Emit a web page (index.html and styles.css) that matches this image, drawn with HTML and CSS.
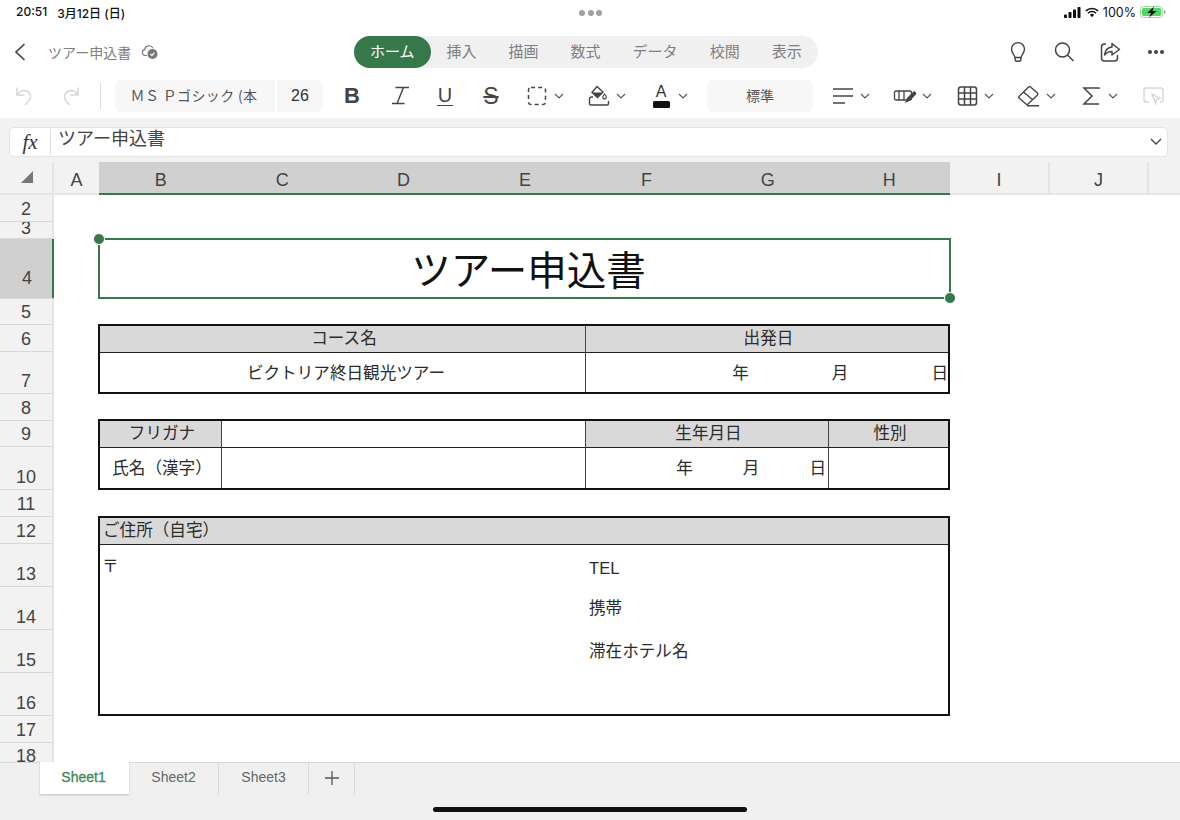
FILE: index.html
```html
<!DOCTYPE html>
<html lang="ja">
<head>
<meta charset="utf-8">
<title>ツアー申込書</title>
<link rel="stylesheet" href="styles.css">
</head>
<body>
<div class="app">
  <div class="status">
    <div class="status-time"><span>20:51</span><span>3月12日 (日)</span></div>
    <div class="status-dots"><i></i><i></i><i></i></div>
    <div class="status-right">
      <svg class="ic-signal" viewBox="0 0 17 11"><rect x="0" y="7.5" width="3" height="3.5" rx=".7"/><rect x="4.5" y="5" width="3" height="6" rx=".7"/><rect x="9" y="2.5" width="3" height="8.5" rx=".7"/><rect x="13.5" y="0" width="3" height="11" rx=".7"/></svg>
      <svg class="ic-wifi" viewBox="0 0 16 12"><path d="M1 4.2a10 10 0 0 1 14 0M3.4 6.8a6.600 6.600 0 0 1 9.200 0" fill="none" stroke="#111" stroke-width="1.800"/><path d="M5.600 8.700a3.400 3.400 0 0 1 4.800 0L8 11.300z" fill="#111"/></svg>
      <span class="status-pct">100%</span>
      <svg class="ic-batt" viewBox="0 0 26 12"><rect x=".5" y=".5" width="22" height="11" rx="3" fill="none" stroke="#a5d6a7"/><rect x="2" y="2" width="19" height="8" rx="1.500" fill="#52d869"/><path d="M24 4v4c1 0 1.600-1 1.600-2s-.6-2-1.600-2z" fill="#a5a5a5"/><path d="M14 .5 7 7h4l-1.800 4.500L16.500 5h-4z" fill="#111"/></svg>
    </div>
  </div>

  <header class="appbar">
    <div class="appbar-left">
      <svg class="ic-back" viewBox="0 0 14 20"><path d="M11.500 2 3 10l8.500 8" fill="none" stroke="#444" stroke-width="1.700"/></svg>
      <span class="doc-name">ツアー申込書</span>
      <svg class="ic-cloud" viewBox="0 0 18 16"><path d="M6 11.500H4a3 3 0 0 1-.4-5.900A4.500 4.500 0 0 1 12 4.200" fill="none" stroke="#777" stroke-width="1.100"/><circle cx="11.500" cy="10" r="5" fill="#777"/><path d="m9.300 10 1.600 1.600 2.600-3" fill="none" stroke="#fff" stroke-width="1.100"/></svg>
    </div>
    <nav class="ribbon-tabs">
      <span class="rtab rtab-active">ホーム</span>
      <span class="rtab">挿入</span>
      <span class="rtab">描画</span>
      <span class="rtab">数式</span>
      <span class="rtab">データ</span>
      <span class="rtab">校閲</span>
      <span class="rtab">表示</span>
    </nav>
    <div class="appbar-right">
      <svg class="ic-head" viewBox="0 0 24 24"><path d="M8.800 17.500c0-2.500-3.300-4.300-3.300-8.400a6.500 6.500 0 0 1 13 0c0 4.100-3.300 5.900-3.300 8.400zM9.200 18v1.500c0 1 .8 1.800 1.800 1.800h2c1 0 1.800-.8 1.800-1.800V18" fill="none" stroke="#444" stroke-width="1.400"/></svg>
      <svg class="ic-head" viewBox="0 0 24 24"><circle cx="10.500" cy="10" r="7" fill="none" stroke="#444" stroke-width="1.500"/><path d="m15.500 15 6 6" stroke="#444" stroke-width="1.500"/></svg>
      <svg class="ic-head" viewBox="0 0 24 24"><path d="M8 4H6.500A3 3 0 0 0 3.500 7v11a3 3 0 0 0 3 3h10a3 3 0 0 0 3-3v-3" fill="none" stroke="#444" stroke-width="1.500"/><path d="M14 3.500 21.500 9.500 14 15v-3.500c-3.500 0-5.500 1-7.500 3.500.5-4.500 3-7.500 7.500-8z" fill="none" stroke="#444" stroke-width="1.500" stroke-linejoin="round"/></svg>
      <div class="ic-more"><i></i><i></i><i></i></div>
    </div>
  </header>

  <div class="toolbar">
    <div class="tool-undo">
      <svg class="ic-tool" viewBox="0 0 24 24"><path d="M4 3.500V11h7.500M4 11c3-4 7-5.500 10.500-3.500 4 2.500 4 7 1 10l-3.500 3.500" fill="none" stroke="#d6d6d6" stroke-width="1.500"/></svg>
      <svg class="ic-tool" viewBox="0 0 24 24"><path d="M20 3.500V11h-7.500M20 11c-3-4-7-5.500-10.500-3.500-4 2.500-4 7-1 10l3.500 3.500" fill="none" stroke="#d6d6d6" stroke-width="1.500"/></svg>
    </div>
    <div class="tool-divider"></div>
    <div class="field field-font">ＭＳ Ｐゴシック (本</div>
    <div class="field field-size">26</div>
    <div class="fmt fmt-b">B</div>
    <div class="fmt fmt-i"><svg class="ic-tool" viewBox="0 0 24 24"><path d="M8.500 3.500H22M5 19.500h12.500M16.500 3.500l-6.500 16" fill="none" stroke="#444" stroke-width="1.400"/></svg></div>
    <div class="fmt fmt-u"><span>U</span></div>
    <div class="fmt fmt-s"><span>S</span></div>
    <div class="drop">
      <svg class="ic-tool" viewBox="0 0 24 24"><rect x="3.500" y="3.500" width="17" height="17" rx="2.500" fill="none" stroke="#444" stroke-width="1.500" stroke-dasharray="4 3.200"/></svg>
      <svg class="chev" viewBox="0 0 10 6"><path d="m1 1 4 4 4-4" fill="none" stroke="#555" stroke-width="1.100"/></svg>
    </div>
    <div class="drop">
      <svg class="ic-tool" viewBox="0 0 24 24"><path d="M10 2.500 16 8l-5.500 5.500L5 8.500z" fill="none" stroke="#444" stroke-width="1.400"/><path d="M5 8.500h11l-5.500 5z" fill="#444"/><path d="M17.500 10c1.200 1.500 1.800 2.500 1.800 3.300a1.700 1.700 0 0 1-3.500 0c0-.8.600-1.800 1.700-3.300z" fill="none" stroke="#444" stroke-width="1.200"/><path d="M6 13H4.500A2 2 0 0 0 2.500 15v4.500a1.500 1.500 0 0 0 1.500 1.500h16a1.500 1.500 0 0 0 1.500-1.500V17" fill="none" stroke="#444" stroke-width="1.400"/></svg>
      <svg class="chev" viewBox="0 0 10 6"><path d="m1 1 4 4 4-4" fill="none" stroke="#555" stroke-width="1.100"/></svg>
    </div>
    <div class="drop">
      <div class="ic-color"><span>A</span><i></i></div>
      <svg class="chev" viewBox="0 0 10 6"><path d="m1 1 4 4 4-4" fill="none" stroke="#555" stroke-width="1.100"/></svg>
    </div>
    <div class="field field-num">標準</div>
    <div class="drop">
      <svg class="ic-tool" viewBox="0 0 24 24"><path d="M2 5h20M2 12h20M2 19h12" stroke="#444" stroke-width="1.500"/></svg>
      <svg class="chev" viewBox="0 0 10 6"><path d="m1 1 4 4 4-4" fill="none" stroke="#555" stroke-width="1.100"/></svg>
    </div>
    <div class="drop">
      <svg class="ic-tool" viewBox="0 0 24 24"><rect x="1.500" y="7" width="17" height="9" rx="1.500" fill="none" stroke="#444" stroke-width="1.300"/><path d="M6 7v9M11 7v9" stroke="#444" stroke-width="1.300"/><path d="m12 19 2-5 6.500-6.500c1-.8 3.500 1.500 2.500 3L16.500 17z" fill="#444"/></svg>
      <svg class="chev" viewBox="0 0 10 6"><path d="m1 1 4 4 4-4" fill="none" stroke="#555" stroke-width="1.100"/></svg>
    </div>
    <div class="drop">
      <svg class="ic-tool" viewBox="0 0 24 24"><rect x="3.500" y="3" width="18" height="18" rx="2.500" fill="none" stroke="#444" stroke-width="1.500"/><path d="M3.500 9h18M3.500 15h18M9.500 3v18M15.500 3v18" stroke="#444" stroke-width="1.500"/></svg>
      <svg class="chev" viewBox="0 0 10 6"><path d="m1 1 4 4 4-4" fill="none" stroke="#555" stroke-width="1.100"/></svg>
    </div>
    <div class="drop">
      <svg class="ic-tool" viewBox="0 0 24 24"><path d="m2 12.500 9.500-9.500a1.500 1.500 0 0 1 2 0l7 6a1.500 1.500 0 0 1 0 2L11 20a1.500 1.500 0 0 1-2 0l-7-6a1 1 0 0 1 0-1.500zM6.500 8l9.500 8M10 21.800h12" fill="none" stroke="#444" stroke-width="1.400"/></svg>
      <svg class="chev" viewBox="0 0 10 6"><path d="m1 1 4 4 4-4" fill="none" stroke="#555" stroke-width="1.100"/></svg>
    </div>
    <div class="drop">
      <svg class="ic-tool" viewBox="0 0 24 24"><path d="M20 5V4H5l8 8-8 8h15" fill="none" stroke="#444" stroke-width="1.500"/></svg>
      <svg class="chev" viewBox="0 0 10 6"><path d="m1 1 4 4 4-4" fill="none" stroke="#555" stroke-width="1.100"/></svg>
    </div>
    <svg class="ic-tool ic-last" viewBox="0 0 24 24"><path d="M8 18H5a2 2 0 0 1-2-2V6a2 2 0 0 1 2-2h15a2 2 0 0 1 2 2v10a2 2 0 0 1-2 2h-1" fill="none" stroke="#d6d6d6" stroke-width="1.400"/><path d="m11 10 8 4.500-3.500 1-1 4z" fill="none" stroke="#d6d6d6" stroke-width="1.400"/></svg>
  </div>

  <div class="formula-band">
    <div class="formula">
      <span class="fx">fx</span>
      <span class="formula-text">ツアー申込書</span>
      <svg class="formula-chev" viewBox="0 0 12 8"><path d="m1 1 5 5 5-5" fill="none" stroke="#444" stroke-width="1.400"/></svg>
    </div>
  </div>

  <div class="col-head">
    <div class="corner"><svg class="corner-tri" viewBox="0 0 12 12"><path d="M12 0v12H0z" fill="#777"/></svg></div>
    <div class="col col-a">A</div>
    <div class="col-sel">
      <span>B</span><span>C</span><span>D</span><span>E</span><span>F</span><span>G</span><span>H</span>
    </div>
    <div class="col col-i">I</div>
    <div class="col col-j">J</div>
    <div class="col col-k"></div>
  </div>

  <div class="grid-body">
    <div class="row-head">
      <div class="rh r27">2</div>
      <div class="rh r17 rh-tight">3</div>
      <div class="rh r60 rh-sel">4</div>
      <div class="rh r26">5</div>
      <div class="rh r27">6</div>
      <div class="rh r42">7</div>
      <div class="rh r27">8</div>
      <div class="rh r26">9</div>
      <div class="rh r43">10</div>
      <div class="rh r27">11</div>
      <div class="rh r27">12</div>
      <div class="rh r43">13</div>
      <div class="rh r43">14</div>
      <div class="rh r43">15</div>
      <div class="rh r43">16</div>
      <div class="rh r27">17</div>
      <div class="rh r26">18</div>
    </div>
    <main class="canvas">
      <div class="title-cell">
        ツアー申込書
        <i class="handle handle-tl"></i>
        <i class="handle handle-br"></i>
      </div>

      <div class="form form-course">
        <div class="cell head">コース名</div>
        <div class="cell head">出発日</div>
        <div class="cell cell-tour">ビクトリア終日観光ツアー</div>
        <div class="cell date date-wide"><span>年</span><span>月</span><span>日</span></div>
      </div>

      <div class="form form-name">
        <div class="cell head">フリガナ</div>
        <div class="cell"></div>
        <div class="cell head">生年月日</div>
        <div class="cell head">性別</div>
        <div class="cell">氏名（漢字）</div>
        <div class="cell"></div>
        <div class="cell date date-narrow"><span>年</span><span>月</span><span>日</span></div>
        <div class="cell"></div>
      </div>

      <div class="form-address">
        <div class="address-head">ご住所（自宅）</div>
        <div class="address-body">
          <div class="address-zip">〒</div>
          <div class="address-info">
            <span class="info-tel">TEL</span>
            <span class="info-mobile">携帯</span>
            <span class="info-hotel">滞在ホテル名</span>
          </div>
        </div>
      </div>
    </main>
  </div>

  <footer class="sheetbar">
    <div class="sheet-tabs">
      <span class="stab stab-active">Sheet1</span>
      <span class="stab">Sheet2</span>
      <span class="stab">Sheet3</span>
      <span class="stab stab-add"><svg class="ic-plus" viewBox="0 0 14 14"><path d="M7 0v14M0 7h14" stroke="#555" stroke-width="1.300"/></svg></span>
    </div>
    <div class="home-bar"></div>
  </footer>
</div>
</body>
</html>
```
FILE: styles.css
```css
* { box-sizing: border-box; }
html, body { margin: 0; padding: 0; }
body {
  width: 1180px;
  height: 820px;
  overflow: hidden;
  background: #fff;
  font-family: "Liberation Sans", "Noto Sans CJK JP", sans-serif;
  color: #222;
}
.app { width: 1180px; height: 820px; display: flex; flex-direction: column; overflow: hidden; }

/* status bar */
.status { height: 24px; flex: none; display: flex; align-items: center; padding: 0 14px 0 16px; position: relative; font-family: Inter, "Noto Sans CJK JP", sans-serif; font-size: 12px; color: #111; }
.status-time { display: flex; gap: 10px; font-weight: 500; }
.status-dots { position: absolute; left: 579px; top: 10px; display: flex; gap: 2.500px; }
.status-dots i { width: 6px; height: 6px; border-radius: 50%; background: #a0a0a0; }
.status-right { margin-left: auto; display: flex; align-items: center; gap: 4px; }
.ic-signal { width: 17px; height: 11px; fill: #111; }
.ic-wifi { width: 14px; height: 11px; }
.status-pct { font-size: 12.500px; }
.ic-batt { width: 26px; height: 12px; }

/* app bar */
.appbar { height: 48px; flex: none; display: flex; align-items: center; padding-top: 8px; }
.appbar-left { width: 354px; flex: none; display: flex; align-items: center; padding-left: 13px; }
.ic-back { width: 14px; height: 20px; }
.doc-name { margin-left: 21px; font-family: "Noto Sans CJK JP", sans-serif; font-size: 14px; color: #808080; }
.ic-cloud { width: 18px; height: 16px; margin-left: 10px; }
.ribbon-tabs { display: flex; height: 32px; background: #f0f0f0; border-radius: 16px; font-family: "Noto Sans CJK JP", sans-serif; font-size: 15px; color: #7f7f7f; }
.rtab { padding: 0 16px; line-height: 30px; white-space: nowrap; }
.rtab-active { background: #37784b; color: #fff; border-radius: 16px; }
.appbar-right { margin-left: auto; display: flex; align-items: center; gap: 22px; padding-right: 16px; }
.ic-head { width: 24px; height: 24px; }
.ic-more { display: flex; gap: 2px; width: 16px; margin-left: 4px; }
.ic-more i { width: 4px; height: 4px; border-radius: 50%; background: #444; flex: none; }

/* toolbar */
.toolbar { height: 46px; flex: none; display: flex; align-items: center; padding-top: 2px; }
.tool-undo { width: 100px; flex: none; display: flex; gap: 21px; padding-left: 13px; }
.ic-tool { width: 24px; height: 24px; flex: none; display: block; }
.tool-divider { width: 1px; height: 26px; background: #dedede; flex: none; }
.field { height: 32px; background: #f7f7f7; border-radius: 6px; flex: none; display: flex; align-items: center; justify-content: center; font-family: "Noto Sans CJK JP", sans-serif; color: #555; white-space: nowrap; overflow: hidden; padding-bottom: 2px; }
.field-font { width: 160px; margin-left: 14px; font-size: 14px; letter-spacing: .35px; border-radius: 6px 0 0 6px; padding-right: 2px; }
.field-size { width: 46px; margin-left: 2px; font-family: "Liberation Sans", sans-serif; font-size: 16px; color: #333; border-radius: 0 6px 6px 0; padding-bottom: 0; }
.fmt { width: 46px; flex: none; display: flex; justify-content: center; color: #444; }
.fmt-b { margin-left: 6px; width: 46px; font-family: "Liberation Sans", sans-serif; font-weight: 700; font-size: 22px; }
.fmt-i { margin-left: 1px; }
.fmt-u span { font-size: 20px; border-bottom: 1.500px solid #444; padding: 0 1px; display: inline-block; line-height: 19px; }
.fmt-s span { font-size: 23px; line-height: 24px; text-decoration: line-through; text-decoration-thickness: 1.500px; }
.drop { width: 62px; flex: none; display: flex; align-items: center; gap: 5px; }
.fmt-s { margin-right: 11px; }
.chev { width: 10px; height: 6px; flex: none; }
.ic-color { width: 24px; height: 24px; flex: none; display: flex; flex-direction: column; align-items: center; font-size: 16px; line-height: 16px; color: #333; }
.ic-color i { width: 17px; height: 7px; background: #111; border-radius: 1.500px; margin-top: 1px; }
.field-num { width: 106px; margin-left: -4px; margin-right: 18px; font-size: 14px; }
.ic-last { margin-left: 0; }

/* formula */
.formula-band { height: 44px; flex: none; background: #f2f2f2; padding: 9px 12px 5px 9px; }
.formula { height: 30px; background: #fff; border: 1px solid #e4e4e4; border-radius: 5px; display: flex; align-items: center; }
.fx { width: 41px; height: 26px; flex: none; border-right: 1px solid #e0e0e0; font-family: "Liberation Serif", serif; font-style: italic; font-size: 21px; line-height: 26px; text-align: center; color: #333; }
.formula-text { margin-left: 7px; font-family: "Noto Sans CJK JP", sans-serif; font-size: 18px; line-height: 22px; color: #444; position: relative; top: -5px; }
.formula-chev { width: 12px; height: 8px; margin-left: auto; margin-right: 5px; }

/* column header */
.col-head { height: 33px; flex: none; display: flex; background: #f2f2f2; border-bottom: 2px solid #e6e6e6; font-size: 18px; color: #444; }
.corner { width: 54px; flex: none; border-right: 2px solid #e4e4e4; display: flex; align-items: center; justify-content: center; }
.corner-tri { width: 12px; height: 12px; margin-left: 1px; margin-top: -1px; }
.col { flex: none; text-align: center; line-height: 37px; }
.col-a { width: 45px; }
.col-sel { width: 851px; flex: none; height: 33px; background: #d0d0d0; border-bottom: 2px solid #37784b; display: grid; grid-template-columns: repeat(7, 1fr); text-align: center; line-height: 37px; padding-left: 1px; }
.col-i { width: 100px; border-right: 2px solid #e4e4e4; }
.col-j { width: 99px; border-right: 2px solid #e4e4e4; }
.col-k { flex: 1; }

/* body */
.grid-body { flex: 1; min-height: 0; display: flex; overflow: hidden; }
.row-head { width: 54px; flex: none; background: #f2f2f2; border-right: 2px solid #e4e4e4; }
.rh { display: flex; align-items: flex-end; justify-content: center; font-size: 18px; color: #444; line-height: 20px; border-bottom: 1px solid #d8d8d8; padding-bottom: 2px; overflow: hidden; }
.rh-tight { padding-bottom: 0; }
.r17 { height: 17px; }
.r26 { height: 26px; }
.r27 { height: 27px; }
.r42 { height: 42px; }
.r43 { height: 43px; }
.r60 { height: 60px; }
.rh-sel { background: #d0d0d0; box-shadow: inset -2px 0 0 #37784b; margin-right: -2px; padding-bottom: 10px; }

.canvas { flex: 1; padding: 43px 0 0 44px; background: #fff; font-family: "Noto Sans CJK JP", sans-serif; font-size: 16.600px; color: #2b2b2b; }
.title-cell { position: relative; width: 853px; height: 61px; border: 2px solid #37784b; text-align: center; font-size: 39.500px; line-height: 56px; color: #111; padding-left: 8px; }
.handle { position: absolute; width: 12px; height: 12px; border-radius: 50%; background: #37784b; border: 1px solid #fff; }
.handle-tl { left: -7px; top: -7px; }
.handle-br { right: -7px; bottom: -7px; }

.form { width: 852px; border: 2px solid #111; display: grid; background: #fff; }
.form-course { margin-top: 25px; height: 70px; grid-template-columns: 486px 1fr; grid-template-rows: 27px 1fr; }
.form-name { margin-top: 25px; height: 71px; grid-template-columns: 122px 364px 243px 1fr; grid-template-rows: 27px 1fr; }
.cell { display: flex; align-items: center; justify-content: center; border-right: 1px solid #444; border-bottom: 1px solid #222; white-space: nowrap; line-height: 20px; padding: 0 0 2px 3px; }
.cell:nth-child(2n) { border-right: 0; }
.form-name .cell:nth-child(2n) { border-right: 1px solid #444; }
.form-name .cell:nth-child(4n) { border-right: 0; }
.cell:nth-last-child(-n+2) { border-bottom: 0; }
.form-name .cell:nth-last-child(-n+4) { border-bottom: 0; }
.head { background: #d9d9d9; padding-bottom: 4px; }
.cell-tour { padding-left: 7px; }
.date { justify-content: flex-end; padding-left: 0; }
.date-wide { gap: 83px; padding-right: 0; }
.date-narrow { gap: 50px; padding-right: 2px; }

.form-address { margin-top: 26px; width: 852px; height: 200px; border: 2px solid #111; }
.address-head { height: 27px; background: #d9d9d9; border-bottom: 1px solid #222; padding-left: 3px; line-height: 23px; }
.address-body { display: flex; }
.address-zip { width: 489px; padding: 8px 0 0 2px; line-height: 24px; }
.address-info { display: flex; flex-direction: column; line-height: 22px; }
.info-tel { margin-top: 13px; font-family: "Liberation Sans", sans-serif; }
.info-mobile { margin-top: 16px; }
.info-hotel { margin-top: 21px; }

/* sheet tabs */
.sheetbar { height: 58px; flex: none; background: #f0f0f0; border-top: 1px solid #d8d8d8; display: flex; flex-direction: column; position: relative; }
.sheet-tabs { display: flex; height: 32px; padding-left: 40px; margin-top: -1px; font-size: 14px; color: #666; }
.stab { width: 90px; text-align: center; line-height: 30px; border-right: 1px solid #d8d8d8; }
.stab-active { width: 89px; padding-right: 2px; background: #fff; color: #3f8a5a; border-right: 0; box-shadow: 0 1px 2px rgba(0,0,0,.2); -webkit-text-stroke: .3px #3f8a5a; }
.stab-add { width: 46px; display: flex; align-items: center; justify-content: center; }
.ic-plus { width: 14px; height: 14px; }
.home-bar { width: 314px; height: 5px; background: #111; border-radius: 3px; margin: 13px auto 0; }
```
